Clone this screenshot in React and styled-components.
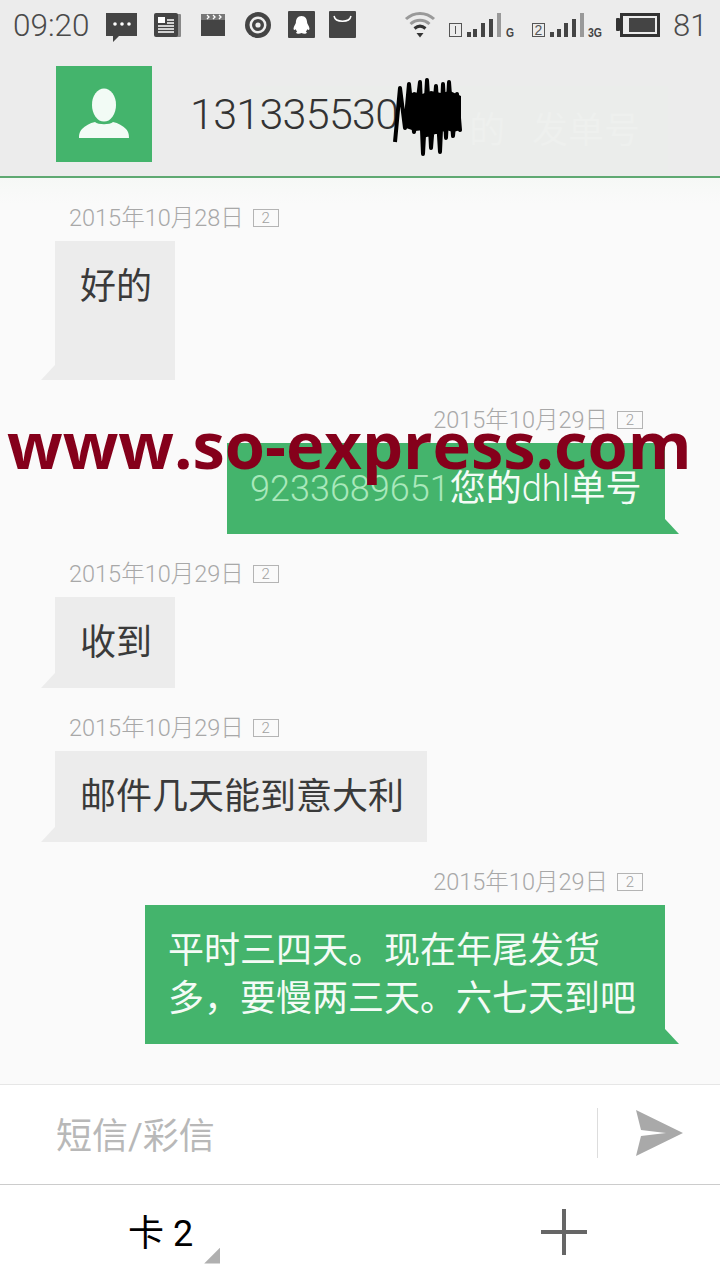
import React from 'react';
import styled, { createGlobalStyle } from 'styled-components';

const GlobalStyle = createGlobalStyle`
    html, body {
        margin: 0;
        padding: 0;
        background: #fff;
    }
    * {
        box-sizing: border-box;
    }
`;

const FONT = `Roboto, "Noto Sans CJK SC", sans-serif`;

// latin runs inside a bubble stay thin next to the CJK text
const Latin = styled.span`
    font-weight: 300;
`;

const Tracking = styled(Latin)`
    color: #a9e8bb;
`;

// inbound and outbound texts of the conversation
const messages = [
    { date: '2015年10月28日', body: <>好的<br /><br /></> },
    {
        date: '2015年10月29日',
        out: true,
        width: 438,
        body: <><Tracking>9233689651</Tracking>您的<Latin>dhl</Latin>单号</>,
    },
    { date: '2015年10月29日', body: '收到' },
    { date: '2015年10月29日', body: '邮件几天能到意大利' },
    {
        date: '2015年10月29日',
        out: true,
        width: 520,
        body: <>平时三四天。现在年尾发货<br />多，要慢两三天。六七天到吧</>,
    },
];

const sim1Bars = [[0, 32], [6, 29], [14, 23], [22, 19]];
const sim2Bars = [[0, 32], [7, 29], [14, 23], [22, 19]];

const App = () => {
    return (
        <Page>
            <GlobalStyle />
            <Top>
                <StatusBar>
                    <Clock>09:20</Clock>

                    <StatusIcon $gap={16} width="31" viewBox="0 0 31 40">
                        <path d="M0 8h31v23H13l-6 6v-6H0z" fill="#444" />
                        <circle cx="9" cy="19" r="1.8" fill="#fff" />
                        <circle cx="16" cy="19" r="1.8" fill="#fff" />
                        <circle cx="23" cy="19" r="1.8" fill="#fff" />
                    </StatusIcon>

                    <StatusIcon $gap={17} width="27" viewBox="0 0 27 40">
                        <rect x="4" y="9" width="23" height="23" rx="1" fill="#888" />
                        <rect x="0" y="8" width="24" height="24" rx="2" fill="#444" />
                        <rect x="4" y="12" width="7" height="6" fill="#fff" />
                        <path d="M13 15h7M13 18h7M4 21h16M4 24h16M4 27h16" stroke="#fff" strokeWidth="1.4" />
                    </StatusIcon>

                    <StatusIcon $gap={20} width="24" viewBox="0 0 24 40">
                        <rect x="0" y="15" width="24" height="16" fill="#444" />
                        <rect x="0" y="9" width="24" height="6" fill="#777" />
                        <path d="M6 10l2 2-2 2M12 10l2 2-2 2M18 10l2 2-2 2" stroke="#fff" strokeWidth="1.3" fill="none" />
                    </StatusIcon>

                    <StatusIcon $gap={20} width="26" viewBox="0 0 26 40">
                        <circle cx="13" cy="20" r="13" fill="#444" />
                        <circle cx="13" cy="20" r="8.5" fill="#eee" />
                        <circle cx="13" cy="20" r="6" fill="#444" />
                        <circle cx="13" cy="20" r="2.6" fill="#eee" />
                    </StatusIcon>

                    <StatusIcon $gap={17} width="27" viewBox="0 0 27 40">
                        <rect x="0" y="6" width="27" height="27" rx="1" fill="#444" />
                        <path d="M13.5 11c-4 0-5.6 3.2-5.6 6.6 0 1.4-2.4 4-2.4 6.2 0 1.4 1 1.4 2.2 0.4 0.3 1 0.8 1.8 1.5 2.4-1.2 0.4-1.6 1.8 0.6 2.1 1.4 0.2 2.6-0.2 3.7-0.8 1.1 0.6 2.3 1 3.7 0.8 2.2-0.3 1.8-1.7 0.6-2.1 0.7-0.6 1.2-1.4 1.5-2.4 1.2 1 2.2 1 2.2-0.4 0-2.2-2.4-4.8-2.4-6.2 0-3.4-1.6-6.6-5.6-6.6z" fill="#fff" />
                    </StatusIcon>

                    <StatusIcon $gap={14} width="27" viewBox="0 0 27 40">
                        <rect x="0" y="6" width="27" height="27" rx="1" fill="#444" />
                        <path d="M5 11c1.5 7 15.5 7 17 0" stroke="#fff" strokeWidth="1.5" fill="none" />
                    </StatusIcon>

                    <StatusIcon $gap={48} width="32" viewBox="0 0 32 40">
                        <path d="M2 14c8-7.5 20-7.5 28 0" stroke="#999" strokeWidth="3" fill="none" />
                        <path d="M6.5 19c5.5-5 13.5-5 19 0" stroke="#999" strokeWidth="3" fill="none" />
                        <path d="M10.5 23.5c3.5-3 7.5-3 11 0" stroke="#333" strokeWidth="3" fill="none" />
                        <path d="M12.5 28h7L16 32.5z" fill="#333" />
                    </StatusIcon>

                    <StatusIcon $gap={13} width="66" viewBox="0 0 66 40">
                        <rect x="0.5" y="18.5" width="12" height="13" fill="none" stroke="#555" />
                        <path d="M6.5 21v8" stroke="#555" />
                        {sim1Bars.map(([x, top]) => (
                            <rect key={x} x={18 + x} y={top - 5} width="4" height={37 - top} fill="#444" />
                        ))}
                        <rect x="48" y="8" width="4" height="24" fill="#999" />
                        <SignalType x="57" y="32" textLength="8" lengthAdjust="spacingAndGlyphs">G</SignalType>
                    </StatusIcon>

                    <StatusIcon $gap={17} width="76" viewBox="0 0 76 40">
                        <rect x="0.5" y="18.5" width="12" height="13" fill="none" stroke="#555" />
                        <SimNumber x="6.5" y="30">2</SimNumber>
                        {sim2Bars.map(([x, top]) => (
                            <rect key={x} x={18 + x} y={top - 5} width="4" height={37 - top} fill="#444" />
                        ))}
                        <rect x="48" y="8" width="4" height="24" fill="#999" />
                        <SignalType x="56" y="32" textLength="14" lengthAdjust="spacingAndGlyphs">3G</SignalType>
                    </StatusIcon>

                    <StatusIcon $gap={8} width="44" viewBox="0 0 44 40">
                        <rect x="0" y="13" width="4" height="13" rx="1" fill="#333" />
                        <rect x="5.5" y="9.5" width="37" height="21" fill="none" stroke="#333" strokeWidth="3" />
                        <rect x="13" y="13" width="26" height="14" fill="#444" />
                    </StatusIcon>

                    <Level>81</Level>
                </StatusBar>

                <Header>
                    <Ghost>的   发单号</Ghost>
                    <Avatar>
                        <svg width="52" height="52" viewBox="0 0 52 52">
                            <ellipse cx="26" cy="17" rx="12" ry="16.5" fill="#f2fbf5" />
                            <path d="M1 50c0-2 0-6 3-9 3-3 8-6 13-7 3 3 15 3 18 0 5 1 10 4 13 7 3 3 3 7 3 9z" fill="#f2fbf5" />
                        </svg>
                    </Avatar>
                    <Contact>131335530</Contact>
                    <Scribble width="72" height="82" viewBox="0 0 72 82">
                        <path
                            d="M2 64L7 10 12 50 16 6 21 54 27 4 30 76 34 2 37 50 38 70 43 8 47 74 50 6 53 60 56 4 60 58 64 16 67 52 50 14 36 50 62 26 28 44 64 38 22 30 66 46 30 58 60 20"
                            fill="none"
                            stroke="#000"
                            strokeWidth="4"
                            strokeLinejoin="round"
                        />
                        <path d="M13 18l8-4 8 2 9-3 10 2 9-2 11 5v34l-8 2-10-3-10 3-9-2-9 1-9-3z" fill="#000" />
                    </Scribble>
                </Header>
            </Top>

            <Thread>
                {messages.map((m, i) => (
                    <Message key={i} $out={m.out}>
                        <Stamp $out={m.out}>
                            {m.date}
                            <SimTag>2</SimTag>
                        </Stamp>
                        <Bubble $out={m.out} style={m.width ? { width: m.width } : undefined}>
                            {m.body}
                        </Bubble>
                    </Message>
                ))}
            </Thread>

            <Watermark>www.so-express.com</Watermark>

            <Composer>
                <Placeholder>短信/彩信</Placeholder>
                <SendWrap>
                    <svg width="48" height="48" viewBox="0 0 48 48">
                        <path d="M1 1l47 23L1 47l5-20 25-3-25-3z" fill="#a9a9a9" />
                    </svg>
                </SendWrap>
            </Composer>

            <BottomBar>
                <CardSwitch>卡 2</CardSwitch>
                <AddButton>
                    <svg width="46" height="46" viewBox="0 0 46 46">
                        <path d="M23 0v46M0 23h46" stroke="#666" strokeWidth="4" />
                    </svg>
                </AddButton>
            </BottomBar>
        </Page>
    );
};

export default App;

const Page = styled.div`
    position: relative;
    width: 720px;
    height: 1280px;
    overflow: hidden;
    background: #fff;
    font-family: ${FONT};
`;

const Top = styled.div`
    background: #ececec;
    border-bottom: 2px solid #5fa972;
`;

const StatusBar = styled.div`
    display: flex;
    align-items: flex-start;
    height: 66px;
    padding: 5px 0 0 13px;
`;

const Clock = styled.span`
    width: 77px;
    height: 40px;
    font-size: 31.5px;
    font-weight: 300;
    line-height: 42px;
    color: #4a4a4a;
`;

const Level = styled.span`
    margin-left: 13px;
    height: 40px;
    font-size: 31px;
    font-weight: 300;
    line-height: 42px;
    color: #4a4a4a;
`;

const StatusIcon = styled.svg`
    flex: none;
    height: 40px;
    margin-left: ${(p) => p.$gap}px;
`;

const SignalType = styled.text`
    font-family: "Liberation Sans", sans-serif;
    font-size: 12px;
    font-weight: 700;
    fill: #444;
`;

const SimNumber = styled.text`
    font-family: "Liberation Sans", sans-serif;
    font-size: 14px;
    text-anchor: middle;
    fill: #555;
`;

const Header = styled.div`
    position: relative;
    display: flex;
    align-items: center;
    height: 110px;
    padding: 0 0 14px 56px;
`;

const Ghost = styled.div`
    position: absolute;
    left: 250px;
    top: 20px;
    width: 418px;
    height: 90px;
    padding: 23px 28px 0 0;
    background: #ebedeb;
    text-align: right;
    white-space: pre;
    font-size: 36px;
    line-height: 44px;
    color: #eef0ee;
`;

const Avatar = styled.div`
    position: relative;
    display: flex;
    align-items: center;
    justify-content: center;
    flex: none;
    width: 96px;
    height: 96px;
    background: #44b46c;
`;

const Contact = styled.div`
    position: relative;
    margin-left: 38px;
    font-size: 43px;
    font-weight: 300;
    letter-spacing: -0.7px;
    color: #333;
`;

const Scribble = styled.svg`
    position: absolute;
    left: 393px;
    top: 12px;
`;

const Thread = styled.div`
    display: flex;
    flex-direction: column;
    height: 906px;
    padding: 0 55px;
    background: linear-gradient(#f6f8f6, #fafafa 26px);
`;

const Message = styled.div`
    display: flex;
    flex-direction: column;
    align-items: ${(p) => (p.$out ? 'flex-end' : 'flex-start')};
`;

const Stamp = styled.div`
    display: flex;
    align-items: center;
    height: 24px;
    margin: 28px ${(p) => (p.$out ? '22px' : '0')} 11px ${(p) => (p.$out ? '0' : '14px')};
    font-size: 23.5px;
    font-weight: 300;
    line-height: 24px;
    color: #a8a8a8;
`;

const SimTag = styled.span`
    display: flex;
    align-items: center;
    justify-content: center;
    width: 26px;
    height: 18px;
    margin-left: 9px;
    border: 1px solid #b4b4b4;
    font-size: 15px;
    color: #a0a0a0;
`;

const Bubble = styled.div`
    position: relative;
    min-width: 120px;
    padding: 21.5px 23px 21.5px ${(p) => (p.$out ? '23px' : '25px')};
    background: ${(p) => (p.$out ? '#44b46c' : '#ececec')};
    color: ${(p) => (p.$out ? '#f4fbf6' : '#3a3a3a')};
    font-size: 36px;
    font-weight: 400;
    line-height: 48px;
    white-space: nowrap;

    &::after {
        content: '';
        position: absolute;
        bottom: 0;
        ${(p) => (p.$out ? 'right: -14px;' : 'left: -14px;')}
        width: 14px;
        height: 15px;
        background: inherit;
        clip-path: ${(p) =>
            p.$out ? 'polygon(0 0, 100% 100%, 0 100%)' : 'polygon(100% 0, 100% 100%, 0 100%)'};
    }
`;

const Watermark = styled.div`
    position: absolute;
    left: 7px;
    top: 402px;
    font-family: "Open Sans", sans-serif;
    font-size: 65px;
    font-weight: 700;
    line-height: 84px;
    color: #85001b;
    white-space: nowrap;
`;

const Composer = styled.div`
    display: flex;
    align-items: center;
    justify-content: space-between;
    height: 101px;
    padding: 0 37px 3px 56px;
    background: #fff;
    border-top: 1px solid #e6e6e6;
    border-bottom: 1px solid #ccc;
`;

const Placeholder = styled.div`
    font-size: 36px;
    font-weight: 400;
    color: #b8b8b8;
`;

const SendWrap = styled.div`
    display: flex;
    align-items: center;
    width: 86px;
    height: 50px;
    padding-left: 37px;
    border-left: 1px solid #ddd;
`;

const BottomBar = styled.div`
    display: flex;
    align-items: center;
    justify-content: space-between;
    height: 95px;
    padding: 0 133px 2px 128px;
    background: #fff;
`;

const CardSwitch = styled.div`
    position: relative;
    margin-top: -4px;
    font-size: 36px;
    font-weight: 400;
    color: #000;

    &::after {
        content: '';
        position: absolute;
        right: -27px;
        bottom: -8px;
        width: 16px;
        height: 16px;
        background: #b0b0b0;
        clip-path: polygon(100% 0, 100% 100%, 0 100%);
    }
`;

const AddButton = styled.div`
    display: flex;
`;
